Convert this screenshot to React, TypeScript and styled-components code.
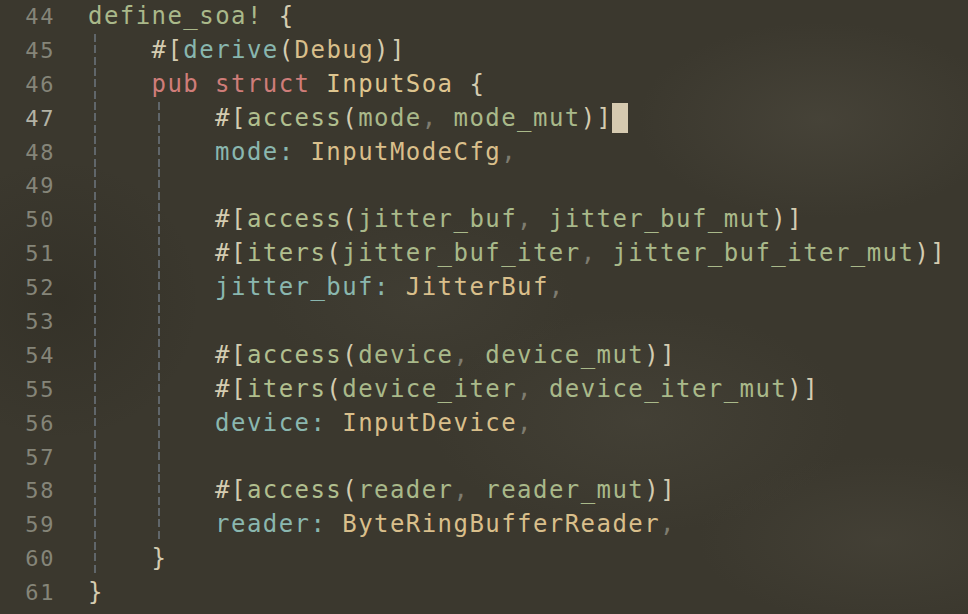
import React from "react";
import styled, { createGlobalStyle } from "styled-components";

const Global = createGlobalStyle`
  html, body { margin: 0; padding: 0; background: #3b382e; }
  body { width: 968px; height: 614px; overflow: hidden; }
`;

const C = {
  kw: "#cf7d79",
  macro: "#aab98a",
  attrBuiltin: "#88b6ae",
  attr: "#b1bf8e",
  arg: "#a9b98a",
  punct: "#d4ccb1",
  comma: "#7e7c70",
  field: "#8ab7af",
  type: "#d9bf8b",
  ident: "#dec58f",
};

type Tok = [keyof typeof C, string];
type Line = { n: number; guides: number; toks: Tok[]; cursor?: boolean };

const lines: Line[] = [
  { n: 44, guides: 0, toks: [["macro", "define_soa!"], ["punct", " {"]] },
  { n: 45, guides: 1, toks: [["punct", "#["], ["attrBuiltin", "derive"], ["punct", "("], ["type", "Debug"], ["punct", ")]"]] },
  { n: 46, guides: 1, toks: [["kw", "pub struct "], ["ident", "InputSoa"], ["punct", " {"]] },
  { n: 47, guides: 2, cursor: true, toks: [["punct", "#["], ["attr", "access"], ["punct", "("], ["arg", "mode"], ["comma", ", "], ["arg", "mode_mut"], ["punct", ")]"]] },
  { n: 48, guides: 2, toks: [["field", "mode:"], ["punct", " "], ["type", "InputModeCfg"], ["comma", ","]] },
  { n: 49, guides: 2, toks: [] },
  { n: 50, guides: 2, toks: [["punct", "#["], ["attr", "access"], ["punct", "("], ["arg", "jitter_buf"], ["comma", ", "], ["arg", "jitter_buf_mut"], ["punct", ")]"]] },
  { n: 51, guides: 2, toks: [["punct", "#["], ["attr", "iters"], ["punct", "("], ["arg", "jitter_buf_iter"], ["comma", ", "], ["arg", "jitter_buf_iter_mut"], ["punct", ")]"]] },
  { n: 52, guides: 2, toks: [["field", "jitter_buf:"], ["punct", " "], ["type", "JitterBuf"], ["comma", ","]] },
  { n: 53, guides: 2, toks: [] },
  { n: 54, guides: 2, toks: [["punct", "#["], ["attr", "access"], ["punct", "("], ["arg", "device"], ["comma", ", "], ["arg", "device_mut"], ["punct", ")]"]] },
  { n: 55, guides: 2, toks: [["punct", "#["], ["attr", "iters"], ["punct", "("], ["arg", "device_iter"], ["comma", ", "], ["arg", "device_iter_mut"], ["punct", ")]"]] },
  { n: 56, guides: 2, toks: [["field", "device:"], ["punct", " "], ["type", "InputDevice"], ["comma", ","]] },
  { n: 57, guides: 2, toks: [] },
  { n: 58, guides: 2, toks: [["punct", "#["], ["attr", "access"], ["punct", "("], ["arg", "reader"], ["comma", ", "], ["arg", "reader_mut"], ["punct", ")]"]] },
  { n: 59, guides: 2, toks: [["field", "reader:"], ["punct", " "], ["type", "ByteRingBufferReader"], ["comma", ","]] },
  { n: 60, guides: 1, toks: [["punct", "}"]] },
  { n: 61, guides: 0, toks: [["punct", "}"]] },
];

const CH = 15.89;
const ROW = 33.9;
const FS = 24;

const Editor = styled.div`
  width: 968px;
  height: 614px;
  overflow: hidden;
  background-color: #3b382e;
  background-image:
    radial-gradient(ellipse 260px 140px at 820px 120px, rgba(90, 86, 74, 0.35), transparent 70%),
    radial-gradient(ellipse 300px 160px at 640px 420px, rgba(85, 82, 70, 0.3), transparent 70%),
    radial-gradient(ellipse 220px 120px at 420px 300px, rgba(80, 77, 66, 0.25), transparent 70%),
    radial-gradient(ellipse 200px 200px at 60px 300px, rgba(40, 38, 30, 0.35), transparent 70%),
    radial-gradient(ellipse 260px 120px at 880px 540px, rgba(88, 84, 72, 0.28), transparent 70%);
  font-family: "DejaVu Sans Mono", "Liberation Mono", monospace;
  font-size: ${FS}px;
  letter-spacing: ${CH - FS * 0.602}px;
  display: flex;
  flex-direction: column;
`;

const Row = styled.div`
  display: flex;
  height: ${ROW}px;
  line-height: ${ROW}px;
  white-space: pre;
  flex-shrink: 0;
`;

const LineNo = styled.span<{ $current?: boolean }>`
  width: 55px;
  text-align: right;
  margin-right: 33px;
  font-size: 22px;
  letter-spacing: 1.6px;
  color: ${(p) => (p.$current ? "#b3b3a6" : "#858579")};
  flex-shrink: 0;
`;

const Code = styled.div`
  display: block;
  height: ${ROW}px;
`;

const Guide = styled.span`
  display: inline-block;
  vertical-align: top;
  width: ${CH * 4}px;
  height: ${ROW}px;
  background-image: repeating-linear-gradient(
    to bottom,
    #60666a 0px,
    #60666a 8px,
    transparent 8px,
    transparent 11.3px
  );
  background-size: 2px 100%;
  background-position: 6px 0;
  background-repeat: no-repeat;
`;

const Tk = styled.span<{ $c: string }>`
  color: ${(p) => p.$c};
`;

const Cursor = styled.span`
  display: inline-block;
  vertical-align: top;
  width: 16px;
  height: 30px;
  margin-top: 1px;
  background: #d6cab0;
`;

export default function App() {
  return (
    <>
      <Global />
      <Editor>
        {lines.map((l) => (
          <Row key={l.n}>
            <LineNo $current={l.cursor}>{l.n}</LineNo>
            <Code>
              {Array.from({ length: l.guides }).map((_, i) => (
                <Guide key={i} />
              ))}
              {l.toks.map((t, i) => (
                <Tk key={i} $c={C[t[0]]}>
                  {t[1]}
                </Tk>
              ))}
              {l.cursor && <Cursor />}
            </Code>
          </Row>
        ))}
      </Editor>
    </>
  );
}
